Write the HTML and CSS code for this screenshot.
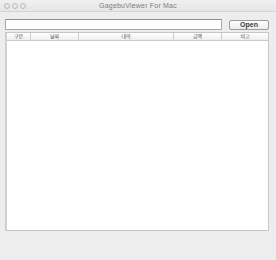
FILE: index.html
```html
<!DOCTYPE html>
<html lang="ko">
<head>
<meta charset="UTF-8">
<meta name="viewport" content="width=device-width, initial-scale=1.0">
<title>GagebuViewer For Mac</title>
<link rel="stylesheet" href="styles.css">
</head>
<body>
<div class="window">
    <div class="titlebar">
        <div class="lights">
            <span class="light"></span>
            <span class="light"></span>
            <span class="light"></span>
        </div>
        <div class="title">GagebuViewer For Mac</div>
    </div>
    <div class="content">
        <div class="toolbar">
            <input class="path" type="text">
            <button class="open-button">Open</button>
        </div>
        <div class="table">
            <div class="table-head">
                <div class="col c1">구분</div>
                <div class="col c2">날짜</div>
                <div class="col c3">내역</div>
                <div class="col c4">금액</div>
                <div class="col c5">비고</div>
            </div>
            <div class="table-body"></div>
        </div>
    </div>
</div>
</body>
</html>
```

FILE: styles.css
```css
body {
    margin: 0;
    padding: 0;
    background: #ededed;
    font-family: "Liberation Sans", "Noto Sans CJK KR", sans-serif;
}

.window {
    width: 276px;
    height: 260px;
    background: #ededed;
    display: flex;
    flex-direction: column;
}

.titlebar {
    height: 11px;
    border-bottom: 1px solid #d4d4d4;
    background: linear-gradient(#f0f0f0, #e6e6e6);
    display: flex;
    align-items: center;
    position: relative;
}

.lights {
    display: flex;
    gap: 2px;
    padding-left: 4px;
}

.light {
    width: 4px;
    height: 4px;
    border: 1px solid #b8b8b8;
    border-radius: 50%;
    background: #e9e9e9;
}

.title {
    position: absolute;
    left: 0;
    right: 0;
    text-align: center;
    font-size: 7px;
    letter-spacing: 0.2px;
    color: #7c7c7c;
    line-height: 11px;
}

.content {
    padding: 6px 7px 0 5px;
}

.toolbar {
    display: flex;
    align-items: center;
    height: 12px;
}

.path {
    width: 217px;
    height: 11px;
    box-sizing: border-box;
    margin: 0;
    padding: 0;
    border: 1px solid #a9a9a9;
    border-top-color: #8f8f8f;
    background: #fff;
}

.open-button {
    margin: 1px 0 0 7px;
    width: 40px;
    height: 10px;
    padding: 0;
    border: 1px solid #9c9c9c;
    border-radius: 2px;
    background: linear-gradient(#ffffff, #ececec);
    font-family: "Liberation Sans", sans-serif;
    font-size: 7px;
    font-weight: bold;
    color: #3a3a3a;
    line-height: 8px;
}

.table {
    margin-top: 2px;
    width: 264px;
    height: 199px;
    box-sizing: border-box;
    border: 1px solid #c6c6c6;
    border-left: 2px solid #cfcfcf;
    background: #fff;
    display: flex;
    flex-direction: column;
}

.table-head {
    display: flex;
    height: 7px;
    border-bottom: 1px solid #c8c8c8;
    background: linear-gradient(#ffffff, #eeeeee);
}

.col {
    font-size: 5px;
    line-height: 7px;
    color: #555;
    text-align: center;
    border-right: 1px solid #cdcdcd;
    box-sizing: border-box;
}

.c1 { width: 24px; }
.c2 { width: 48px; }
.c3 { width: 95px; }
.c4 { width: 48px; }
.c5 { flex: 1; border-right: none; }

.table-body {
    flex: 1;
}
```
